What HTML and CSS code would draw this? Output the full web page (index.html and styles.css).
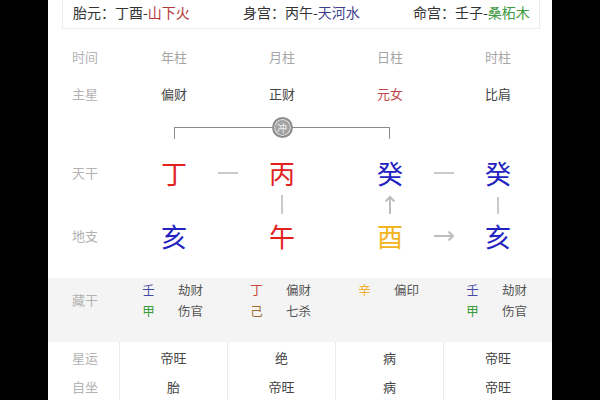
FILE: index.html
```html
<!DOCTYPE html>
<html lang="zh">
<head>
<meta charset="utf-8">
<link rel="stylesheet" href="styles.css">
</head>
<body>
<div class="panel">
  <div class="card">
    <div class="ci">胎元：丁酉-<span class="t-red">山下火</span></div>
    <div class="ci">身宫：丙午-<span class="t-blue">天河水</span></div>
    <div class="ci">命宫：壬子-<span class="t-green">桑柘木</span></div>
  </div>

  <div class="row5 head">
    <div class="lab">时间</div><div class="cell">年柱</div><div class="cell">月柱</div><div class="cell">日柱</div><div class="cell">时柱</div>
  </div>
  <div class="row5 star">
    <div class="lab">主星</div><div class="cell">偏财</div><div class="cell">正财</div><div class="cell me">元女</div><div class="cell">比肩</div>
  </div>

  <div class="grid9 bracket-row">
    <div class="bracket"><span class="chong">冲</span></div>
  </div>

  <div class="grid9 big">
    <div class="lab">天干</div>
    <div class="ch fire">丁</div>
    <div class="link"><span class="hline"></span></div>
    <div class="ch fire">丙</div>
    <div class="link"></div>
    <div class="ch water">癸</div>
    <div class="link"><span class="hline"></span></div>
    <div class="ch water">癸</div>
  </div>

  <div class="grid9 vlinks">
    <div class="lab"></div>
    <div class="vc"></div>
    <div class="link"></div>
    <div class="vc"><span class="vline"></span></div>
    <div class="link"></div>
    <div class="vc">
      <svg width="12" height="20" viewBox="0 0 12 20"><path d="M6 19V2M1.5 6.5L6 2l4.5 4.5" fill="none" stroke="#bdbdbd" stroke-width="2"/></svg>
    </div>
    <div class="link"></div>
    <div class="vc"><span class="vline short"></span></div>
  </div>

  <div class="grid9 big">
    <div class="lab">地支</div>
    <div class="ch water">亥</div>
    <div class="link"></div>
    <div class="ch fire">午</div>
    <div class="link"></div>
    <div class="ch earth">酉</div>
    <div class="link">
      <svg width="22" height="12" viewBox="0 0 22 12"><path d="M1 6h19M15.5 1.5L20 6l-4.5 4.5" fill="none" stroke="#bdbdbd" stroke-width="2"/></svg>
    </div>
    <div class="ch water">亥</div>
  </div>

  <div class="hidden row5">
    <div class="lab">藏干</div>
    <div class="hcell">
      <div class="hl"><span class="stem s-ren">壬</span><span class="god">劫财</span></div>
      <div class="hl"><span class="stem s-jia">甲</span><span class="god">伤官</span></div>
    </div>
    <div class="hcell">
      <div class="hl"><span class="stem s-ding">丁</span><span class="god">偏财</span></div>
      <div class="hl"><span class="stem s-ji">己</span><span class="god">七杀</span></div>
    </div>
    <div class="hcell">
      <div class="hl"><span class="stem s-xin">辛</span><span class="god">偏印</span></div>
    </div>
    <div class="hcell">
      <div class="hl"><span class="stem s-ren">壬</span><span class="god">劫财</span></div>
      <div class="hl"><span class="stem s-jia">甲</span><span class="god">伤官</span></div>
    </div>
  </div>

  <div class="table row5">
    <div class="lab tc">星运</div><div class="tc v">帝旺</div><div class="tc v">绝</div><div class="tc v">病</div><div class="tc v">帝旺</div>
    <div class="lab tc">自坐</div><div class="tc v">胎</div><div class="tc v">帝旺</div><div class="tc v">病</div><div class="tc v">帝旺</div>
  </div>
</div>
</body>
</html>
```

FILE: styles.css
```css
html, body {
  margin: 0;
  padding: 0;
  background: #000;
}
body {
  width: 600px;
  height: 400px;
  overflow: hidden;
  font-family: "Noto Sans CJK SC", "Noto Sans", sans-serif;
}
.panel {
  margin-left: 48px;
  width: 504px;
  height: 400px;
  background: #fff;
  overflow: hidden;
}
.card {
  margin: 0 12px 0 14px;
  height: 28px;
  border: 1px solid #ececec;
  border-top: none;
  display: grid;
  grid-template-columns: 170px 170px 1fr;
  padding-left: 10px;
  font-size: 14px;
  line-height: 24px;
  color: #333;
}
.t-red { color: #b3363a; }
.t-blue { color: #3e3e8e; }
.t-green { color: #3f9a42; }

.row5 {
  display: grid;
  grid-template-columns: 72px repeat(4, 108px);
}
.lab {
  padding-left: 24px;
  color: #b3b3b3;
  font-size: 13px;
}
.cell {
  text-align: center;
  font-size: 13px;
}
.head {
  margin-top: 9px;
  line-height: 37px;
}
.head .cell { color: #a6a6a6; }
.star { line-height: 37px; }
.star .cell { color: #454545; }
.star .me { color: #c2474a; }

.grid9 {
  display: grid;
  grid-template-columns: 106px 40px 68px 40px 68px 40px 68px 40px 34px;
}
.bracket-row {
  margin-top: 6px;
  height: 22px;
}
.bracket {
  grid-column: 2 / 7;
  margin: 9px 20px 0;
  height: 11px;
  border: 1.5px solid #8a8a8a;
  border-bottom: none;
  position: relative;
}
.chong {
  position: absolute;
  left: 50%;
  top: -11.5px;
  margin-left: -10.5px;
  width: 17px;
  height: 17px;
  border: 2px solid #8c8c8c;
  border-radius: 50%;
  background: #a3a3a3;
  box-shadow: inset 0 0 0 1px #e6e6e6;
  color: #f2f2f2;
  font-size: 10px;
  line-height: 17px;
  text-align: center;
}
.big {
  margin-top: 15px;
  height: 36px;
  line-height: 36px;
  align-items: center;
}
.big + .vlinks + .big { margin-top: 0; }
.big .lab { line-height: 36px; }
.ch {
  text-align: center;
  font-size: 26px;
}
.fire { color: #e0211e; }
.water { color: #2222c0; }
.earth { color: #f2b322; }
.link {
  display: flex;
  justify-content: center;
  align-items: center;
}
.hline {
  display: block;
  width: 20px;
  height: 2.5px;
  background: #cacaca;
}
.vlinks {
  height: 27px;
}
.vc {
  display: flex;
  justify-content: center;
  align-items: center;
}
.vline {
  display: block;
  width: 2.5px;
  height: 19px;
  background: #cacaca;
}
.vline.short {
  height: 17px;
  margin-top: 2px;
}

.hidden {
  margin-top: 24px;
  background: #f4f4f4;
  padding: 1px 0 21px;
  align-items: center;
}
.hidden .lab {
  line-height: 42px;
}
.hcell {
  align-self: start;
  padding-left: 22px;
}
.hl {
  display: flex;
  height: 21px;
  line-height: 21px;
  font-size: 12.5px;
}
.stem {
  width: 13px;
  margin-right: 23px;
  text-align: center;
}
.god { color: #555; }
.s-ren { color: #4747a6; }
.s-jia { color: #3a9c3c; }
.s-ding { color: #c4483a; }
.s-ji { color: #a36a2c; }
.s-xin { color: #f0b232; }

.table .tc {
  height: 30px;
  line-height: 30px;
  font-size: 13px;
  border-right: 1px solid #ebebeb;
}
.table .tc:nth-child(5n) { border-right: none; }
.table .v {
  text-align: center;
  color: #444;
}
.table .tc:nth-child(-n+5) { padding-top: 1px; height: 29px; }
```
